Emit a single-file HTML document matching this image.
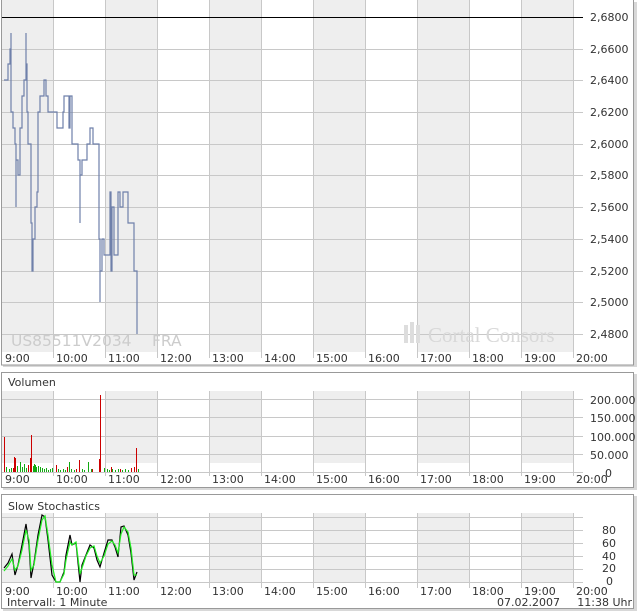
<!DOCTYPE html>
<html><head><meta charset="utf-8"><style>
html,body{margin:0;padding:0;background:#fff;width:640px;height:614px;overflow:hidden}
svg text{font-family:"DejaVu Sans","Liberation Sans",sans-serif;font-size:11px;fill:#333}
</style></head><body>
<svg width="640" height="614" xmlns="http://www.w3.org/2000/svg">
<g fill="#d8d8d8"><rect x="3" y="2" width="634" height="365"/><rect x="3" y="374" width="634" height="116"/><rect x="3" y="496" width="634" height="115"/></g>
<g fill="#fff" stroke="#999"><rect x="1.5" y="-1" width="632" height="366"/><rect x="1.5" y="372.5" width="632" height="115"/><rect x="1.5" y="494.5" width="632" height="114"/></g>

<g fill="#eee"><rect x="2" y="0" width="51" height="352"/><rect x="105" y="0" width="52" height="352"/><rect x="209" y="0" width="52" height="352"/><rect x="313" y="0" width="52" height="352"/><rect x="417" y="0" width="52" height="352"/><rect x="521" y="0" width="52" height="352"/></g>
<g stroke="#c8c8c8" stroke-width="1">
<path d="M53.5 0V358M105.5 0V358M157.5 0V358M209.5 0V358M261.5 0V358M313.5 0V358M365.5 0V358M417.5 0V358M469.5 0V358M521.5 0V358M573.5 0V358"/>
<path d="M2 49.5H583M2 80.5H583M2 112.5H583M2 144.5H583M2 175.5H583M2 207.5H583M2 239.5H583M2 271.5H583M2 302.5H583M2 334.5H583"/>
</g>
<path d="M2 17.5H583" stroke="#000"/>
<text x="11" y="346" style="font-size:15.5px;fill:#ccc">US85511V2034</text>
<text x="152" y="346" style="font-size:15.5px;fill:#ccc">FRA</text>
<text x="428" y="342" style="font-size:21px;fill:#d8d8d8;font-family:'Liberation Serif',serif">Cortal Consors</text>
<g fill="#ddd"><rect x="404" y="325" width="4" height="18"/><rect x="410" y="322" width="4" height="21"/><rect x="416" y="325" width="4" height="18"/></g>
<path fill="none" stroke="#6f80aa" stroke-width="1.2" d="M4,80 H8 V64 H10 V49 H11 V33 V112 H13 V128 H15 V144 H16 V207 V160 H18 V175 H20 V128 H22 V96 H24 V80 H26 V33 V64 H27 V112 H28 V144 H31 V223 H32 V271 H33 V239 H35 V207 H37 V192 H38 V112 H40 V96 H44 V80 H46 V96 H48 V112 H57 V128 H63 V112 H64 V96 H69 V128 H70 V96 H72 V144 H78 V160 H80 V223 V175 H82 V160 H87 V144 H90 V128 H93 V144 H99 V239 H100 V302 V271 H102 V239 H104 V255 H110 V192 H111 V271 H112 V207 H114 V255 H118 V192 H120 V207 H123 V192 H128 V223 H134 V271 H137 V334"/>
<g>
<text x="590" y="21">2,6800</text><text x="590" y="53">2,6600</text><text x="590" y="84">2,6400</text><text x="590" y="116">2,6200</text><text x="590" y="148">2,6000</text><text x="590" y="179">2,5800</text><text x="590" y="211">2,5600</text><text x="590" y="243">2,5400</text><text x="590" y="275">2,5200</text><text x="590" y="306">2,5000</text><text x="590" y="338">2,4800</text>
</g>
<g><text x="5" y="362">9:00</text><text x="56" y="362">10:00</text><text x="108" y="362">11:00</text><text x="160" y="362">12:00</text><text x="212" y="362">13:00</text><text x="264" y="362">14:00</text><text x="316" y="362">15:00</text><text x="368" y="362">16:00</text><text x="420" y="362">17:00</text><text x="472" y="362">18:00</text><text x="524" y="362">19:00</text><text x="576" y="362">20:00</text></g>

<text x="8" y="386">Volumen</text>
<g fill="#eee"><rect x="2" y="391" width="51" height="72"/><rect x="105" y="391" width="52" height="72"/><rect x="209" y="391" width="52" height="72"/><rect x="313" y="391" width="52" height="72"/><rect x="417" y="391" width="52" height="72"/><rect x="521" y="391" width="52" height="72"/></g>
<g stroke="#c8c8c8">
<path d="M53.5 391V476M105.5 391V476M157.5 391V476M209.5 391V476M261.5 391V476M313.5 391V476M365.5 391V476M417.5 391V476M469.5 391V476M521.5 391V476M573.5 391V476"/>
<path d="M2 399.5H583M2 417.5H583M2 436.5H583M2 454.5H583M2 472.5H583"/>
</g>
<g fill="#1a1">
<rect x="6" y="467" width="1" height="5"/><rect x="9" y="469" width="1" height="3"/><rect x="11" y="468" width="1" height="4"/><rect x="17" y="466" width="1" height="6"/><rect x="20" y="462" width="1" height="10"/><rect x="22" y="467" width="1" height="5"/><rect x="24" y="464" width="1" height="8"/><rect x="26" y="468" width="1" height="4"/><rect x="33" y="466" width="1" height="6"/><rect x="34" y="464" width="1" height="8"/><rect x="35" y="465" width="1" height="7"/><rect x="36" y="467" width="1" height="5"/><rect x="38" y="466" width="1" height="6"/><rect x="40" y="467" width="1" height="5"/><rect x="42" y="468" width="1" height="4"/><rect x="44" y="469" width="1" height="3"/><rect x="46" y="468" width="1" height="4"/><rect x="48" y="470" width="1" height="2"/><rect x="50" y="469" width="1" height="3"/><rect x="52" y="468" width="1" height="4"/><rect x="58" y="469" width="1" height="3"/><rect x="60" y="470" width="1" height="2"/><rect x="63" y="469" width="1" height="3"/><rect x="65" y="470" width="1" height="2"/><rect x="69" y="462" width="1" height="10"/><rect x="71" y="469" width="1" height="3"/><rect x="74" y="470" width="1" height="2"/><rect x="82" y="469" width="1" height="3"/><rect x="84" y="470" width="1" height="2"/><rect x="88" y="462" width="1" height="10"/><rect x="91" y="469" width="1" height="3"/><rect x="104" y="468" width="1" height="4"/><rect x="107" y="469" width="1" height="3"/><rect x="109" y="470" width="1" height="2"/><rect x="112" y="469" width="1" height="3"/><rect x="115" y="470" width="1" height="2"/><rect x="118" y="469" width="1" height="3"/><rect x="122" y="470" width="1" height="2"/><rect x="125" y="469" width="1" height="3"/><rect x="128" y="470" width="1" height="2"/><rect x="138" y="469" width="1" height="3"/>
</g>
<g fill="#c00">
<rect x="4" y="437" width="1" height="35"/><rect x="14" y="457" width="1" height="15"/><rect x="15" y="458" width="1" height="14"/><rect x="13" y="468" width="1" height="4"/><rect x="28" y="465" width="1" height="7"/><rect x="30" y="458" width="1" height="14"/><rect x="31" y="435" width="1" height="37"/><rect x="56" y="465" width="1" height="7"/><rect x="67" y="467" width="1" height="5"/><rect x="76" y="469" width="1" height="3"/><rect x="79" y="460" width="1" height="12"/><rect x="92" y="469" width="1" height="3"/><rect x="99" y="459" width="1" height="13"/><rect x="100" y="395" width="1" height="77"/><rect x="111" y="467" width="1" height="5"/><rect x="120" y="469" width="1" height="3"/><rect x="131" y="468" width="1" height="4"/><rect x="134" y="467" width="1" height="5"/><rect x="136" y="448" width="1" height="24"/>
</g>
<g><text x="590" y="404">200.000</text><text x="590" y="422">150.000</text><text x="590" y="441">100.000</text><text x="590" y="459">50.000</text><text x="605" y="477">0</text></g>
<g><text x="5" y="483">9:00</text><text x="56" y="483">10:00</text><text x="108" y="483">11:00</text><text x="160" y="483">12:00</text><text x="212" y="483">13:00</text><text x="264" y="483">14:00</text><text x="316" y="483">15:00</text><text x="368" y="483">16:00</text><text x="420" y="483">17:00</text><text x="472" y="483">18:00</text><text x="524" y="483">19:00</text><text x="576" y="483">20:00</text></g>

<text x="8" y="510">Slow Stochastics</text>
<g fill="#eee"><rect x="2" y="513" width="51" height="69"/><rect x="105" y="513" width="52" height="69"/><rect x="209" y="513" width="52" height="69"/><rect x="313" y="513" width="52" height="69"/><rect x="417" y="513" width="52" height="69"/><rect x="521" y="513" width="52" height="69"/></g>
<g stroke="#c8c8c8">
<path d="M53.5 513V588M105.5 513V588M157.5 513V588M209.5 513V588M261.5 513V588M313.5 513V588M365.5 513V588M417.5 513V588M469.5 513V588M521.5 513V588M573.5 513V588"/>
<path d="M2 517.5H583M2 530.5H583M2 543.5H583M2 556.5H583M2 569.5H583M2 582.5H583"/>
</g>
<polyline fill="none" stroke="#000" stroke-width="1.2" points="4,568 8,563 12,554 15,575 18,565 22,545 26,524 29,545 31,578 34,563 38,535 42,515 45,517 48,540 52,575 56,582 60,582 64,572 66,555 70,535 72,545 76,543 80,582 82,565 86,555 90,545 94,548 97,560 100,567 104,553 108,540 112,540 115,547 118,557 121,527 124,526 128,535 131,553 134,580 137,572"/>
<polyline fill="none" stroke="#2e2" stroke-width="1.2" points="4,571 8,566 12,559 15,570 18,566 22,550 26,530 29,540 31,570 34,565 38,540 42,520 45,516 48,535 52,565 56,582 60,582 64,574 66,560 70,542 72,545 76,542 80,574 82,568 86,556 90,548 94,546 97,556 100,563 104,556 108,544 112,541 115,545 118,553 121,534 124,527 128,532 131,548 134,575 137,575"/>
<g><text x="602" y="534">80</text><text x="602" y="547">60</text><text x="602" y="560">40</text><text x="602" y="572">20</text><text x="606" y="585">0</text></g>
<g><text x="5" y="595">9:00</text><text x="56" y="595">10:00</text><text x="108" y="595">11:00</text><text x="160" y="595">12:00</text><text x="212" y="595">13:00</text><text x="264" y="595">14:00</text><text x="316" y="595">15:00</text><text x="368" y="595">16:00</text><text x="420" y="595">17:00</text><text x="472" y="595">18:00</text><text x="524" y="595">19:00</text><text x="576" y="595">20:00</text></g>
<text x="7" y="606">Intervall: 1 Minute</text>
<text x="497" y="606">07.02.2007</text>
<text x="632" y="606" text-anchor="end">11:38 Uhr</text>
</svg>
</body></html>
